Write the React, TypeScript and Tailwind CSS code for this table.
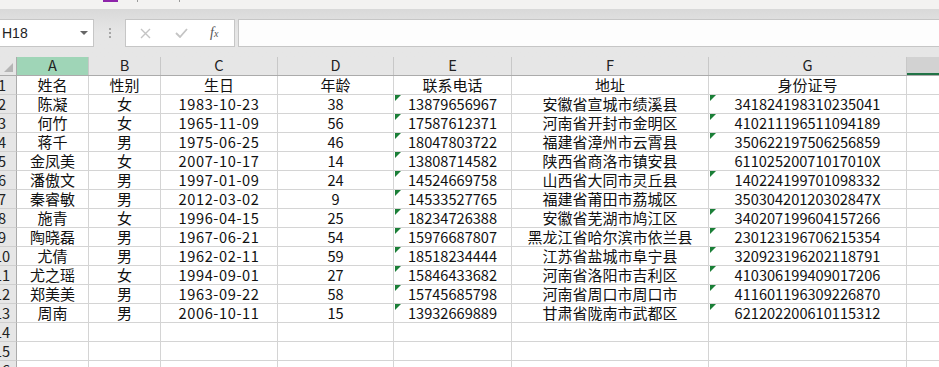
import React from "react";

const cols = [
  { key: "A", w: "w-[72px]" },
  { key: "B", w: "w-[72px]" },
  { key: "C", w: "w-[117px]" },
  { key: "D", w: "w-[116px]" },
  { key: "E", w: "w-[118px]" },
  { key: "F", w: "w-[197px]" },
  { key: "G", w: "w-[198px]" },
];

// [name, gender, birthday, age, phone, address, id, idFlag]
const rows: [string, string, string, string, string, string, string, boolean][] = [
  ["陈凝", "女", "1983-10-23", "38", "13879656967", "安徽省宣城市绩溪县", "341824198310235041", true],
  ["何竹", "女", "1965-11-09", "56", "17587612371", "河南省开封市金明区", "410211196511094189", true],
  ["蒋千", "男", "1975-06-25", "46", "18047803722", "福建省漳州市云霄县", "350622197506256859", true],
  ["金凤美", "女", "2007-10-17", "14", "13808714582", "陕西省商洛市镇安县", "61102520071017010X", false],
  ["潘傲文", "男", "1997-01-09", "24", "14524669758", "山西省大同市灵丘县", "140224199701098332", true],
  ["秦睿敏", "男", "2012-03-02", "9", "14533527765", "福建省莆田市荔城区", "35030420120302847X", false],
  ["施青", "女", "1996-04-15", "25", "18234726388", "安徽省芜湖市鸠江区", "340207199604157266", true],
  ["陶晓磊", "男", "1967-06-21", "54", "15976687807", "黑龙江省哈尔滨市依兰县", "230123196706215354", true],
  ["尤倩", "男", "1962-02-11", "59", "18518234444", "江苏省盐城市阜宁县", "320923196202118791", true],
  ["尤之瑶", "女", "1994-09-01", "27", "15846433682", "河南省洛阳市吉利区", "410306199409017206", true],
  ["郑美美", "男", "1963-09-22", "58", "15745685798", "河南省周口市周口市", "411601196309226870", true],
  ["周南", "男", "2006-10-11", "15", "13932669889", "甘肃省陇南市武都区", "621202200610115312", true],
];

const header = ["姓名", "性别", "生日", "年龄", "联系电话", "地址", "身份证号"];

function Flag() {
  return (
    <span className="absolute top-0 left-[1px] w-0 h-0 border-t-[6px] border-t-[#1a7f37] border-r-[6px] border-r-transparent" />
  );
}

function Cell({ w, text, flag }: { w: string; text?: string; flag?: boolean }) {
  const cjk = text ? /[\u4e00-\u9fff]/.test(text) : false;
  const date = text ? text.includes("-") : false;
  return (
    <div
      className={`${w} shrink-0 h-[19px] relative border-r border-b border-[#d4d4d4] flex items-center justify-center whitespace-nowrap text-[#111] ${
        cjk ? "text-[15px]" : "text-[14.6px]"
      } ${date ? "tracking-[0.6px]" : ""}`}
    >
      {flag && <Flag />}
      {text}
    </div>
  );
}

function RowNum({ n }: { n: number }) {
  return (
    <div className="w-[17px] shrink-0 h-[19px] overflow-hidden bg-[#e6e6e6] border-r border-r-[#ababab] border-b border-b-[#cfcfcf] flex items-center">
      <div className="w-[24px] shrink-0 ml-[-10px] text-center text-[14.6px] text-[#222] leading-none">
        {n}
      </div>
    </div>
  );
}

function Row({ n, values, flags }: { n: number; values: string[]; flags: boolean[] }) {
  return (
    <div className="flex">
      <RowNum n={n} />
      {cols.map((c, i) => (
        <Cell key={c.key} w={c.w} text={values[i]} flag={flags[i]} />
      ))}
      <div className="flex-1 h-[19px] border-b border-[#d4d4d4]" />
    </div>
  );
}

export default function App() {
  return (
    <div className="w-[939px] h-[367px] overflow-hidden bg-white font-['Noto_Sans_CJK_SC',sans-serif]">
      {/* ribbon remnant */}
      <div className="h-[9px] bg-[#f3f2f1] flex items-start">
        <div className="ml-[103px] w-[15px] h-[2px] bg-[#8e24aa]" />
        <div className="ml-[19px] w-[1px] h-[2px] bg-[#9a9a9a]" />
        <div className="ml-[41px] w-[1px] h-[2px] bg-[#9a9a9a]" />
      </div>

      {/* formula bar */}
      <div className="h-[48px] bg-gradient-to-b from-[#d9d9d9] via-[#e6e6e6] to-[#e6e6e6] pt-[10px] flex items-start">
        <div className="w-[94px] h-[28px] bg-white border border-[#c6c6c6] border-l-0 flex items-center justify-between pr-[5px]">
          <span className="text-[14px] text-[#222] pl-[2px] font-['Liberation_Sans',sans-serif]">H18</span>
          <span className="w-0 h-0 border-l-[4px] border-r-[4px] border-t-[4px] border-l-transparent border-r-transparent border-t-[#666]" />
        </div>
        <div className="w-[31px] h-[28px] flex flex-col items-center justify-center gap-[2px]">
          <span className="w-[2px] h-[2px] bg-[#a6a6a6]" />
          <span className="w-[2px] h-[2px] bg-[#a6a6a6]" />
          <span className="w-[2px] h-[2px] bg-[#a6a6a6]" />
        </div>
        <div className="w-[110px] h-[28px] bg-white border border-[#c6c6c6] flex items-center">
          <svg className="ml-[14px]" width="11" height="11" viewBox="0 0 11 11">
            <path d="M1 1 L10 10 M10 1 L1 10" stroke="#c4c4c4" strokeWidth="1.4" />
          </svg>
          <svg className="ml-[24px]" width="13" height="10" viewBox="0 0 13 10">
            <path d="M1 5 L5 9 L12 1" stroke="#c4c4c4" strokeWidth="1.8" fill="none" />
          </svg>
          <span className="ml-[22px] text-[14px] italic text-[#555] font-['Liberation_Serif',serif] leading-none">
            f<span className="text-[10px]">x</span>
          </span>
        </div>
        <div className="ml-[3px] flex-1 h-[28px] bg-[#fdfdfd] border border-r-0 border-[#c6c6c6]" />
      </div>

      {/* column headers */}
      <div className="flex h-[19px] bg-[#e6e6e6] border-b border-[#ababab]">
        <div className="w-[17px] shrink-0 h-full border-r border-[#ababab] flex items-end justify-end pr-[3px] pb-[3px]">
          <svg width="9" height="9" viewBox="0 0 9 9">
            <path d="M9 0 L9 9 L0 9 Z" fill="#b5b5b5" />
          </svg>
        </div>
        {cols.map((c) => (
          <div
            key={c.key}
            className={`${c.w} shrink-0 h-full border-r border-[#c8c8c8] flex items-end justify-center pb-[1px] text-[14.6px] leading-none text-[#222] ${
              c.key === "A" ? "bg-[#9fd5b7]" : ""
            }`}
          >
            <span className="pb-[1px]">{c.key}</span>
          </div>
        ))}
        <div className="flex-1 h-full bg-[#d2d2d2] border-b-2 border-[#217346]" />
      </div>

      {/* data */}
      <Row n={1} values={header} flags={[]} />
      {rows.map((r, i) => (
        <Row
          key={i}
          n={i + 2}
          values={r.slice(0, 7) as string[]}
          flags={[false, false, false, false, true, false, r[7]]}
        />
      ))}
      <Row n={14} values={[]} flags={[]} />
      <Row n={15} values={[]} flags={[]} />
      <Row n={16} values={[]} flags={[]} />
    </div>
  );
}
